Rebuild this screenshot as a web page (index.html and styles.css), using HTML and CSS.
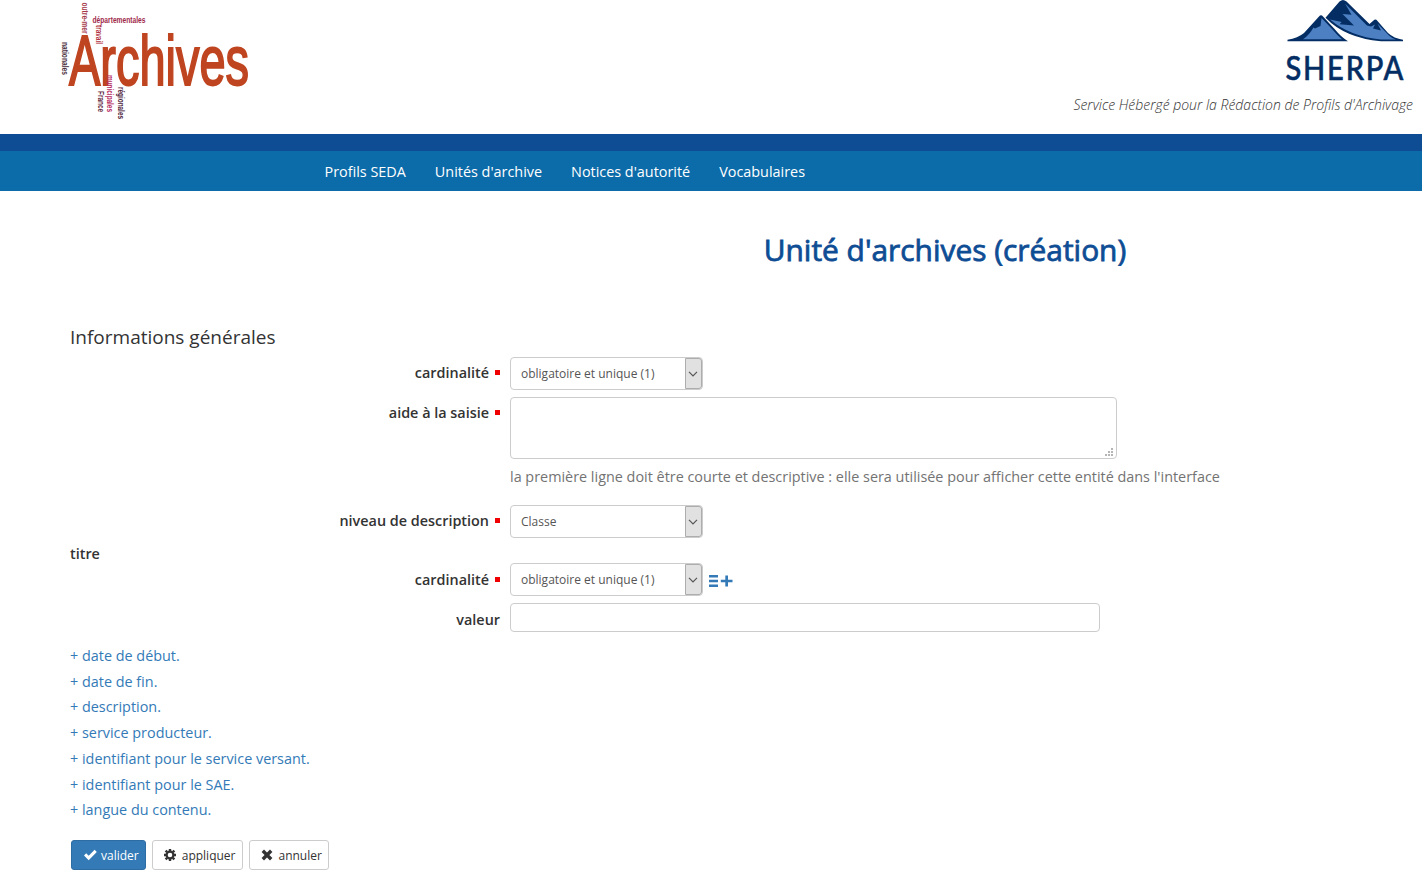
FILE: index.html
```html
<!DOCTYPE html>
<html lang="fr">
<head>
<meta charset="utf-8">
<title>Unité d'archives (création)</title>
<link rel="stylesheet" href="styles.css">
</head>
<body>
<header class="header">
  <svg class="logo-archives" width="200" height="130" viewBox="60 0 200 130" role="img" aria-label="Archives">
    <text class="word-main" x="69" y="85" textLength="180" lengthAdjust="spacingAndGlyphs">Archives</text>
    <g class="word-small">
      <text fill="#a0284a" x="92.5" y="22.5" textLength="53" lengthAdjust="spacingAndGlyphs">départementales</text>
      <text fill="#a5384a" transform="translate(81.5 2.500) rotate(90)" textLength="31" lengthAdjust="spacingAndGlyphs">outre-mer</text>
      <text fill="#b03040" transform="translate(95.5 25) rotate(90)" textLength="19" lengthAdjust="spacingAndGlyphs">travail</text>
      <text fill="#4a3040" transform="translate(62 42) rotate(90)" textLength="33" lengthAdjust="spacingAndGlyphs">nationales</text>
      <text fill="#b52860" transform="translate(107 75) rotate(90)" textLength="37" lengthAdjust="spacingAndGlyphs">municipales</text>
      <text fill="#602840" transform="translate(97.5 91) rotate(90)" textLength="21" lengthAdjust="spacingAndGlyphs">France</text>
      <text fill="#4a2038" transform="translate(118 87) rotate(90)" textLength="32" lengthAdjust="spacingAndGlyphs">régionales</text>
    </g>
  </svg>
  <div class="brand">
    <svg class="logo-sherpa" width="120" height="84" viewBox="1285 0 120 84" role="img" aria-label="SHERPA">
      <path fill="#032d63" d="M1287.500 41.200V39.800Q1298 38 1304 33L1319 16.500Q1321 14 1323 16.500L1335 29.500Q1341 37 1348 41.200Z"/>
      <path fill="#4c80c3" d="M1321.500 18L1332 29Q1337 35 1342 39.300H1303Q1309 35.500 1313.500 27.500L1315 28.500L1320.500 26Z"/>
      <path fill="#032d63" d="M1325.500 17.700L1339.500 1.500Q1343-1.500 1346.500 1.500L1369.500 24L1373.500 20.500Q1375.500 18.500 1377.500 21L1388 33Q1394 38.500 1403 39.700V41.200H1381Q1345 38 1325.500 17.700Z"/>
      <path fill="#4c80c3" d="M1345 3.500L1367 25.500L1371 26.500L1375 24.500L1373 28.500L1381 30.500L1377.500 23.500L1389 35.500Q1392 38.500 1396 39.500H1381Q1350 36.500 1330 19.500L1341.700 22L1339.500 24.300L1354 25.500L1342.500 14L1351.500 14.800Z"/>
      <text class="sherpa-word" transform="translate(1285.500 79.500) scale(.88 1)" textLength="134" lengthAdjust="spacing">SHERPA</text>
    </svg>
    <p class="tagline">Service Hébergé pour la Rédaction de Profils d'Archivage</p>
  </div>
</header>
<nav class="nav">
  <a>Profils SEDA</a><a>Unités d'archive</a><a>Notices d'autorité</a><a>Vocabulaires</a>
</nav>
<main class="main">
  <h1 class="title"><span>Unité d'archives (création)</span></h1>
  <h2 class="section">Informations générales</h2>
  <div class="row row-select">
    <label class="label required">cardinalité</label>
    <div class="select"><span>obligatoire et unique (1)</span><i class="arrow"><svg width="10" height="6" viewBox="0 0 10 6"><path d="M1 .8L5 4.800L9 .8"/></svg></i></div>
  </div>
  <div class="row row-area">
    <label class="label required">aide à la saisie</label>
    <div>
      <div class="area"><svg width="8" height="8" viewBox="0 0 8 8"><path fill="#b5b5b5" d="M6 0h2v2h-2zM3 3h2v2h-2zM6 3h2v2h-2zM0 6h2v2h-2zM3 6h2v2h-2zM6 6h2v2h-2z"/></svg></div>
      <p class="help">la première ligne doit être courte et descriptive : elle sera utilisée pour afficher cette entité dans l'interface</p>
    </div>
  </div>
  <div class="row row-select">
    <label class="label required">niveau de description</label>
    <div class="select"><span>Classe</span><i class="arrow"><svg width="10" height="6" viewBox="0 0 10 6"><path d="M1 .8L5 4.800L9 .8"/></svg></i></div>
  </div>
  <h3 class="subsection"><span>titre</span></h3>
  <div class="row row-select row-title">
    <label class="label required">cardinalité</label>
    <div class="select"><span>obligatoire et unique (1)</span><i class="arrow"><svg width="10" height="6" viewBox="0 0 10 6"><path d="M1 .8L5 4.800L9 .8"/></svg></i></div>
    <svg class="add" width="24" height="12" viewBox="0 0 24 12"><path fill="#337ab7" d="M0 0h9v2.400h-9zM0 4.800h9v2.400h-9zM0 9.600h9v2.400h-9zM16.300 .5h2.700v4.300h4.500v2.400h-4.500v4.300h-2.700v-4.300h-4.500v-2.400h4.500z"/></svg>
  </div>
  <div class="row row-input">
    <label class="label">valeur</label>
    <div class="input"></div>
  </div>
  <ul class="links">
    <li><a>+ date de début.</a></li>
    <li><a>+ date de fin.</a></li>
    <li><a>+ description.</a></li>
    <li><a>+ service producteur.</a></li>
    <li><a>+ identifiant pour le service versant.</a></li>
    <li><a>+ identifiant pour le SAE.</a></li>
    <li><a>+ langue du contenu.</a></li>
  </ul>
  <div class="buttons">
    <button class="btn btn-primary"><svg width="13" height="12" viewBox="0 0 13 12"><path fill="#fff" d="M0 6.500L2.200 4.300L4.700 6.700L10.600 .8L12.800 3L4.700 11.200Z"/></svg>valider</button>
    <button class="btn btn-apply"><svg width="12" height="12" viewBox="0 0 12 12"><circle cx="6" cy="6" r="3.400" fill="none" stroke="#333" stroke-width="2.200"/><path stroke="#333" stroke-width="2.400" d="M6 0v2M6 10v2M0 6h2M10 6h2M1.600 1.600l1.600 1.600M8.800 8.800l1.600 1.600M1.600 10.400l1.600-1.600M8.800 3.200l1.600-1.600"/></svg>appliquer</button>
    <button class="btn"><svg width="12" height="12" viewBox="0 0 12 12"><path stroke="#333" stroke-width="3.400" d="M1.800 1.800L10.200 10.200M10.200 1.800L1.800 10.200"/></svg>annuler</button>
  </div>
</main>
</body>
</html>
```
FILE: styles.css
```css
* { box-sizing: border-box; }
body { margin: 0; background: #fff; color: #333; font: 14.4px/20px "Open Sans", sans-serif; }
h1, h2, h3, p, ul { margin: 0; padding: 0; font-weight: 400; }
.header { display: flex; justify-content: space-between; height: 134px; padding: 0 9px 0 60px; }
.logo-archives { overflow: visible; }
.word-main { font: 70px "Liberation Sans", sans-serif; fill: #bf4520; stroke: #bf4520; stroke-width: 2px; }
.word-small { font: bold 9.5px "Liberation Sans", sans-serif; }
.brand { display: flex; flex-direction: column; align-items: flex-end; }
.logo-sherpa { margin-right: 8px; overflow: visible; }
.sherpa-word { font: 500 33px Lato, sans-serif; fill: #032d63; stroke: #032d63; stroke-width: .6px; }
.tagline { margin-top: 11px; font-size: 14px; font-style: italic; font-weight: 300; }
.nav { display: flex; gap: 29px; height: 57px; padding: 11px 0 0 324.5px; border-top: 17px solid #0e4d94; background: #0c6ba9; color: #fff; font-size: 14.4px; }
.main { padding: 0 70px; }
.title { display: flex; justify-content: center; height: 127px; padding: 39px 0 0 468px; color: #0e4d94; font-size: 29.9px; line-height: 40px; -webkit-text-stroke: .8px #0e4d94; }
.section { height: 39px; padding-top: 6px; font-size: 19px; line-height: 26px; }
.row { display: flex; gap: 10px; }
.row-select { height: 40px; }
.row-area { height: 108px; }
.row-input { height: 40px; }
.label { display: flex; justify-content: flex-end; gap: 6px; width: 430px; padding-top: 6px; font-weight: 600; }
.row-input .label, .row-title .label { padding-top: 7px; }
.required::after { content: ""; width: 5px; height: 5px; margin-top: 7px; background: #f00000; }
.select { display: flex; justify-content: space-between; width: 193px; height: 33px; padding-left: 10px; border: 1px solid #ccc; border-radius: 4px; color: #555; font-size: 12px; line-height: 31px; }
.arrow { display: flex; align-items: center; justify-content: center; width: 17px; padding-right: 1px; border: 1px solid #adadad; border-radius: 0 3px 3px 0; background: #e1e1e1; }
.arrow svg { flex: none; }
.arrow path { fill: none; stroke: #555; stroke-width: 1.2; }
.area { display: flex; align-items: flex-end; justify-content: flex-end; width: 607px; height: 62px; padding: 0 3px 2px 0; border: 1px solid #ccc; border-radius: 4px; }
.help { margin-top: 8px; color: #737373; white-space: nowrap; }
.subsection { height: 18px; font-size: 14.4px; font-weight: 600; line-height: 17px; }
.add { margin: 12px 0 0 -4px; }
.input { width: 590px; height: 29px; border: 1px solid #ccc; border-radius: 4px; }
.links { height: 197px; list-style: none; color: #337ab7; line-height: 25.7px; }
.buttons { display: flex; gap: 6px; padding-left: 1px; }
.btn { display: flex; align-items: center; gap: 5px; height: 30px; padding: 0 6px 0 11px; border: 1px solid #ccc; border-radius: 3px; background: #fff; color: #333; font: 12px "Open Sans", sans-serif; }
.btn-primary { gap: 4px; padding-left: 12px; border-color: #2e6da4; background: #337ab7; color: #fff; }
.btn-apply { gap: 6px; }
.btn-apply { padding-right: 7px; }
```
